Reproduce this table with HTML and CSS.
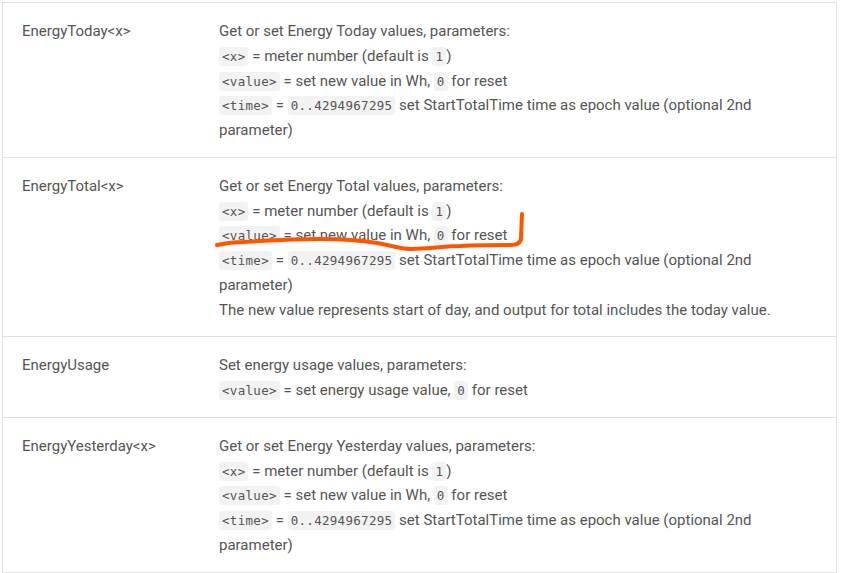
FILE: index.html
```html
<!DOCTYPE html>
<html>
<head>
<meta charset="utf-8">
<link rel="stylesheet" href="styles.css">
</head>
<body>
<div class="cmds">
  <div class="row">
    <div class="name">EnergyToday&lt;x&gt;</div>
    <div class="desc">Get or set Energy Today values, parameters:<br>
      <code>&lt;x&gt;</code> = meter number (default is <code>1</code>)<br>
      <code>&lt;value&gt;</code> = set new value in Wh, <code>0</code> for reset<br>
      <code>&lt;time&gt;</code> = <code>0..4294967295</code> set StartTotalTime time as epoch value (optional 2nd parameter)</div>
  </div>
  <div class="row">
    <div class="name">EnergyTotal&lt;x&gt;</div>
    <div class="desc">Get or set Energy Total values, parameters:<br>
      <code>&lt;x&gt;</code> = meter number (default is <code>1</code>)<br>
      <span class="marked"><code>&lt;value&gt;</code> = set new value in Wh, <code>0</code> for reset<svg class="scribble" width="320" height="50" viewBox="0 0 320 50"><path d="M2 37 C 12 35, 20 34, 28 34 C 60 32, 90 31, 105 31 C 130 31, 150 33, 162 35 C 175 37, 185 41, 195 41 C 215 41, 230 38, 245 38 C 265 37, 285 37, 295 37 C 302 37, 306 35, 306 30 L 307 6" fill="none" stroke="#ff5500" stroke-width="4" stroke-linecap="round" stroke-linejoin="round"/></svg></span><br>
      <code>&lt;time&gt;</code> = <code>0..4294967295</code> set StartTotalTime time as epoch value (optional 2nd parameter)<br>
      The new value represents start of day, and output for total includes the today value.</div>
  </div>
  <div class="row">
    <div class="name">EnergyUsage</div>
    <div class="desc">Set energy usage values, parameters:<br>
      <code>&lt;value&gt;</code> = set energy usage value, <code>0</code> for reset</div>
  </div>
  <div class="row">
    <div class="name">EnergyYesterday&lt;x&gt;</div>
    <div class="desc">Get or set Energy Yesterday values, parameters:<br>
      <code>&lt;x&gt;</code> = meter number (default is <code>1</code>)<br>
      <code>&lt;value&gt;</code> = set new value in Wh, <code>0</code> for reset<br>
      <code>&lt;time&gt;</code> = <code>0..4294967295</code> set StartTotalTime time as epoch value (optional 2nd parameter)</div>
  </div>
</div>
</body>
</html>
```
FILE: styles.css
```css
html, body {
  margin: 0;
  padding: 0;
  background: #fff;
}
body {
  padding: 2px 0 0 2px;
}
.cmds {
  width: 835px;
  box-sizing: border-box;
  border: 1px solid #e0e0e0;
  border-bottom: none;
  font-family: Roboto, "Liberation Sans", sans-serif;
  font-size: 15px;
  color: #555;
  line-height: 24.75px;
}
.row {
  display: grid;
  grid-template-columns: 196px 1fr;
  border-bottom: 1px solid #e0e0e0;
}
.name {
  padding: 16px 0 14px 19px;
}
.desc {
  padding: 16px 20px 14px 20px;
}
code {
  font-family: "DejaVu Sans Mono", "Liberation Mono", monospace;
  font-size: 12.5px;
  letter-spacing: 0.3px;
  line-height: 1;
  background: #f2f2f2;
  border-radius: 3px;
  padding: 2px 3px;
}
.marked {
  position: relative;
}
.scribble {
  position: absolute;
  left: -4px;
  top: -18px;
  pointer-events: none;
}
```
